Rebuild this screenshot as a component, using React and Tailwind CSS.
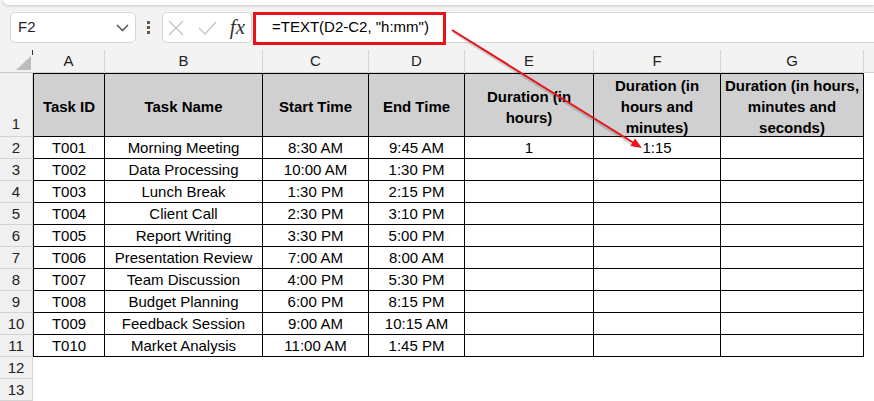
import React from 'react';

const rows = [
  ['T001', 'Morning Meeting', '8:30 AM', '9:45 AM', '1', '1:15', ''],
  ['T002', 'Data Processing', '10:00 AM', '1:30 PM', '', '', ''],
  ['T003', 'Lunch Break', '1:30 PM', '2:15 PM', '', '', ''],
  ['T004', 'Client Call', '2:30 PM', '3:10 PM', '', '', ''],
  ['T005', 'Report Writing', '3:30 PM', '5:00 PM', '', '', ''],
  ['T006', 'Presentation Review', '7:00 AM', '8:00 AM', '', '', ''],
  ['T007', 'Team Discussion', '4:00 PM', '5:30 PM', '', '', ''],
  ['T008', 'Budget Planning', '6:00 PM', '8:15 PM', '', '', ''],
  ['T009', 'Feedback Session', '9:00 AM', '10:15 AM', '', '', ''],
  ['T010', 'Market Analysis', '11:00 AM', '1:45 PM', '', '', ''],
];

const headers = [
  'Task ID',
  'Task Name',
  'Start Time',
  'End Time',
  'Duration (in hours)',
  'Duration (in hours and minutes)',
  'Duration (in hours, minutes and seconds)',
];

const letters = ['A', 'B', 'C', 'D', 'E', 'F', 'G'];

function RowNum({ n, tall }) {
  return (
    <div className={`flex justify-center border-r border-b border-[#d4d4d4] bg-[#f0f0f0] text-[15px] text-[#222] ${tall ? 'items-end pb-[1px]' : 'items-center pt-[2px]'}`}>
      {n}
    </div>
  );
}

function FormulaBar() {
  return (
    <div className="h-[50px] flex flex-col">
      <div className="h-[6px] ml-[2px] bg-white border-b border-l border-[#d8d8d8] rounded-bl-[6px] shadow-[0_1px_2px_rgba(0,0,0,0.08)]" />
      <div className="flex items-center mt-[6px] h-[31px]">
        <div className="ml-[10px] w-[126px] h-full bg-white border border-[#d6d6d6] rounded-[5px] flex items-center justify-between pl-[7px] pr-[6px]">
          <span className="text-[15px] text-[#222]">F2</span>
          <svg width="13" height="8" viewBox="0 0 13 8">
            <polyline points="1,1 6.5,6.5 12,1" fill="none" stroke="#444" strokeWidth="1.3" />
          </svg>
        </div>
        <div className="ml-[11px] flex flex-col gap-[2px]">
          <span className="w-[3px] h-[3px] bg-[#6b5644]" />
          <span className="w-[3px] h-[3px] bg-[#6b5644]" />
          <span className="w-[3px] h-[3px] bg-[#6b5644]" />
        </div>
        <div className="ml-[12px] w-[90px] h-full bg-white border border-[#d6d6d6] rounded-[5px] flex items-center pl-[5px] pr-[6px]">
          <svg width="16" height="16" viewBox="0 0 16 16">
            <path d="M1 1 L15 15 M15 1 L1 15" stroke="#c4c4c4" strokeWidth="1.3" fill="none" />
          </svg>
          <svg width="19" height="16" viewBox="0 0 19 16" className="ml-[14px]">
            <polyline points="1,8 7,14 18,2" stroke="#c4c4c4" strokeWidth="1.3" fill="none" />
          </svg>
          <span className="ml-auto font-['Liberation_Serif',serif] italic text-[21px] leading-none text-[#333]">fx</span>
        </div>
        <div className="relative ml-[3px] flex-1 h-full bg-white border border-r-0 border-[#d6d6d6] rounded-l-[5px] flex items-center pl-[16px]">
          <span className="text-[15px] text-black">=TEXT(D2-C2, "h:mm")</span>
          <div className="absolute left-[-3px] top-[-1px] w-[193px] h-[33px] border-[3px] border-[#e8121a]" />
        </div>
      </div>
    </div>
  );
}

export default function App() {
  return (
    <div className="relative w-[874px] h-[401px] overflow-hidden bg-[#f3f3f3] font-['Liberation_Sans',Arial,sans-serif]">
      <FormulaBar />
      <div className="grid grid-cols-[33px_72px_158px_106px_96px_129px_127px_143px_1fr] grid-rows-[23px_64px_repeat(12,22px)] bg-white">
        <div className="relative bg-[#f3f3f3] border-b border-[#c8c8c8]">
          <svg width="15" height="14" viewBox="0 0 15 14" className="absolute left-[16px] top-[6px]">
            <polygon points="15,0 15,14 0,14" fill="#bdbdbd" />
          </svg>
          <div className="absolute right-0 top-0 w-px h-[5px] bg-[#333]" />
        </div>
        {letters.map((l) => (
          <div key={l} className="flex items-center justify-center pt-[1px] bg-[#f3f3f3] border-r border-b border-[#d4d4d4] text-[15px] text-[#222]">
            {l}
          </div>
        ))}
        <div className="bg-[#f3f3f3] border-b border-[#d4d4d4]" />

        <RowNum n={1} tall />
        {headers.map((h, i) => (
          <div
            key={h}
            className={`flex items-center justify-center text-center px-[2px] pt-[3px] bg-[#d0d0d0] border-t border-r border-b border-black font-bold text-[15px] leading-[21px] text-black ${i === 0 ? 'border-l' : ''}`}
          >
            {h}
          </div>
        ))}
        <div />

        {rows.map((r, ri) => (
          <React.Fragment key={r[0]}>
            <RowNum n={ri + 2} />
            {r.map((v, ci) => (
              <div
                key={ci}
                className={`flex items-center justify-center pt-[2px] whitespace-nowrap border-r border-b border-black text-[15px] text-black ${ci === 0 ? 'border-l' : ''}`}
              >
                {v}
              </div>
            ))}
            <div />
          </React.Fragment>
        ))}

        <RowNum n={12} />
        <div className="col-span-8" />
        <RowNum n={13} />
        <div className="col-span-8" />
      </div>

      <svg className="absolute inset-0 pointer-events-none" width="874" height="401">
        <line x1="453" y1="32" x2="632" y2="144" stroke="#000" strokeOpacity="0.15" strokeWidth="3" />
        <line x1="452" y1="30" x2="633" y2="142.5" stroke="#e8121a" strokeWidth="2" />
        <polygon points="642,148 630.4,146 635,138.6" fill="#e8121a" />
      </svg>
    </div>
  );
}
